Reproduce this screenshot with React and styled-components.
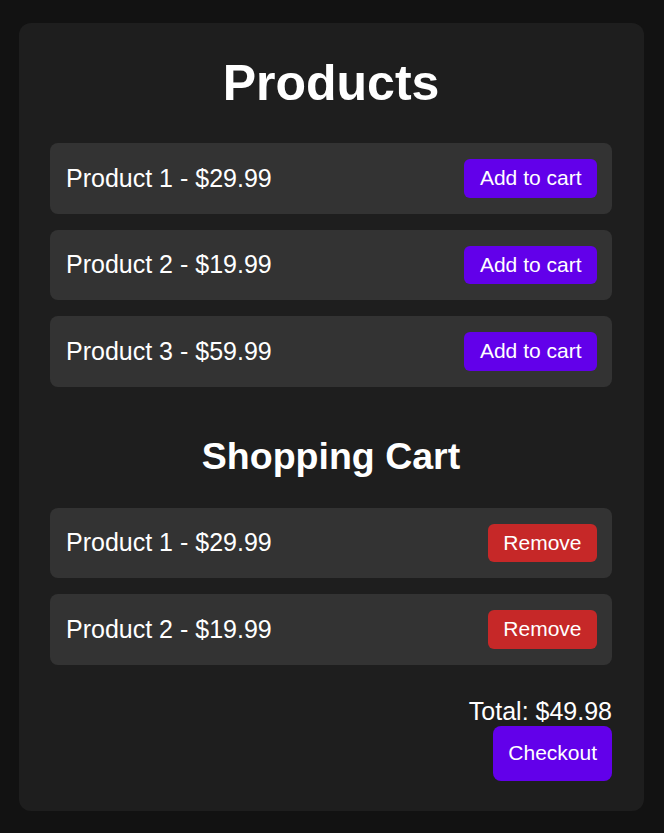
import React from 'react';
import styled, { createGlobalStyle } from 'styled-components';

const GlobalStyle = createGlobalStyle`
  html, body {
    margin: 0;
    padding: 0;
    background: #121212;
    font-family: "Liberation Sans", Arial, sans-serif;
    color: #fff;
  }
  * {
    box-sizing: border-box;
  }
`;

const Card = styled.div`
  margin: 23px 20px 22px 19px;
  padding: 31px 32px 30px 31px;
  background: #1e1e1e;
  border-radius: 12px;
`;

const Title = styled.h1`
  margin: 0 0 31px;
  text-align: center;
  font-size: 50px;
  font-weight: 700;
`;

const SubTitle = styled.h2`
  margin: 48px 0 30px;
  text-align: center;
  font-size: 37.5px;
  font-weight: 700;
`;

const List = styled.div`
  display: flex;
  flex-direction: column;
  gap: 16px;
`;

const Row = styled.div`
  display: flex;
  align-items: center;
  justify-content: space-between;
  padding: 16px 15px 16px 16px;
  background: #333333;
  border-radius: 8px;
  font-size: 25px;
`;

const Button = styled.button`
  border: none;
  border-radius: 6px;
  padding: 7px 15.5px;
  font-family: inherit;
  font-size: 21px;
  line-height: 1.17;
  color: #fff;
  background: ${(p) => (p.$danger ? '#c62828' : '#6200ea')};
  cursor: pointer;
`;

const Footer = styled.div`
  margin-top: 32px;
  display: flex;
  flex-direction: column;
  align-items: flex-end;
`;

const Total = styled.div`
  font-size: 25px;
`;

const CheckoutButton = styled(Button)`
  padding: 15.5px 15px;
  border-radius: 8px;
`;

const products = [
  { id: 1, name: 'Product 1', price: 29.99 },
  { id: 2, name: 'Product 2', price: 19.99 },
  { id: 3, name: 'Product 3', price: 59.99 },
];

const cart = [products[0], products[1]];

export default function App() {
  const total = cart.reduce((sum, p) => sum + p.price, 0);
  return (
    <>
      <GlobalStyle />
      <Card>
        <Title>Products</Title>
        <List>
          {products.map((p) => (
            <Row key={p.id}>
              <span>
                {p.name} - ${p.price.toFixed(2)}
              </span>
              <Button>Add to cart</Button>
            </Row>
          ))}
        </List>
        <SubTitle>Shopping Cart</SubTitle>
        <List>
          {cart.map((p) => (
            <Row key={p.id}>
              <span>
                {p.name} - ${p.price.toFixed(2)}
              </span>
              <Button $danger>Remove</Button>
            </Row>
          ))}
        </List>
        <Footer>
          <Total>Total: ${total.toFixed(2)}</Total>
          <CheckoutButton>Checkout</CheckoutButton>
        </Footer>
      </Card>
    </>
  );
}
